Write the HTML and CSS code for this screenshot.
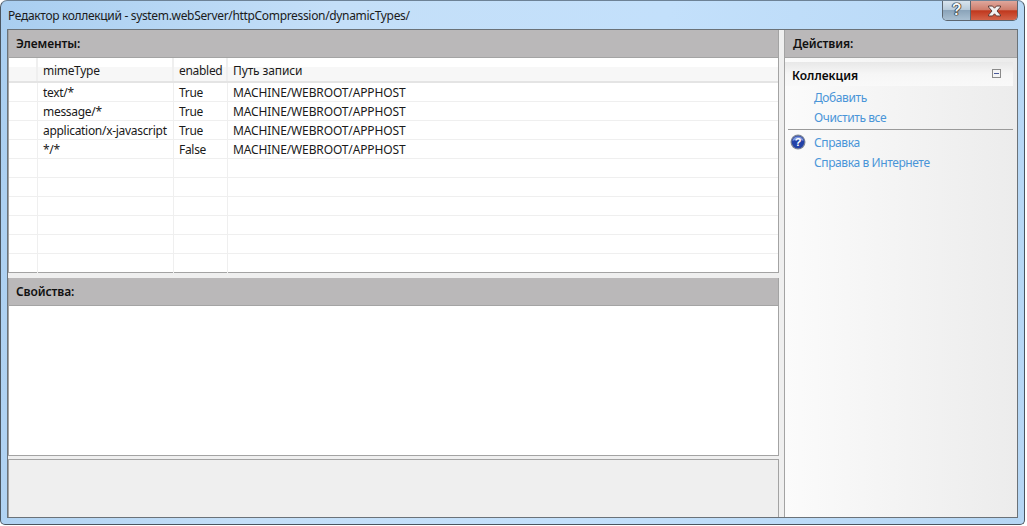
FILE: index.html
```html
<!DOCTYPE html>
<html>
<head>
    <title>Редактор коллекций</title>
    <link rel="stylesheet" href="styles.css">
</head>
<body>
    <div class="window">
        <div class="titlebar">
            <div class="title">Редактор коллекций - system.webServer/httpCompression/dynamicTypes/</div>
            <div class="caption-buttons">
                <div class="btn-help">?</div>
                <div class="btn-close">
                    <svg width="17" height="12" viewBox="0 0 17 12">
                        <path d="M2.500 1h4l2 2.200 2-2.200h4v1l-3.500 4 3.500 4v1h-4l-2-2.200-2 2.200h-4v-1l3.500-4-3.500-4z" fill="#f1f1f1" stroke="#5e3b36" stroke-width="1"/>
                    </svg>
                </div>
            </div>
        </div>
        <div class="client">
            <div class="left">
                <div class="panel panel-items">
                    <div class="panel-head">Элементы:</div>
                    <div class="grid">
                        <div class="row row-head">
                            <div class="cell c0"></div>
                            <div class="cell c1">mimeType</div>
                            <div class="cell c2">enabled</div>
                            <div class="cell c3">Путь записи</div>
                        </div>
                        <div class="row">
                            <div class="cell c0"></div>
                            <div class="cell c1">text/*</div>
                            <div class="cell c2">True</div>
                            <div class="cell c3">MACHINE/WEBROOT/APPHOST</div>
                        </div>
                        <div class="row">
                            <div class="cell c0"></div>
                            <div class="cell c1">message/*</div>
                            <div class="cell c2">True</div>
                            <div class="cell c3">MACHINE/WEBROOT/APPHOST</div>
                        </div>
                        <div class="row">
                            <div class="cell c0"></div>
                            <div class="cell c1">application/x-javascript</div>
                            <div class="cell c2">True</div>
                            <div class="cell c3">MACHINE/WEBROOT/APPHOST</div>
                        </div>
                        <div class="row">
                            <div class="cell c0"></div>
                            <div class="cell c1">*/*</div>
                            <div class="cell c2">False</div>
                            <div class="cell c3">MACHINE/WEBROOT/APPHOST</div>
                        </div>
                        <div class="row"><div class="cell c0"></div><div class="cell c1"></div><div class="cell c2"></div><div class="cell c3"></div></div>
                        <div class="row"><div class="cell c0"></div><div class="cell c1"></div><div class="cell c2"></div><div class="cell c3"></div></div>
                        <div class="row"><div class="cell c0"></div><div class="cell c1"></div><div class="cell c2"></div><div class="cell c3"></div></div>
                        <div class="row"><div class="cell c0"></div><div class="cell c1"></div><div class="cell c2"></div><div class="cell c3"></div></div>
                        <div class="row"><div class="cell c0"></div><div class="cell c1"></div><div class="cell c2"></div><div class="cell c3"></div></div>
                        <div class="row row-last"><div class="cell c0"></div><div class="cell c1"></div><div class="cell c2"></div><div class="cell c3"></div></div>
                    </div>
                </div>
                <div class="panel panel-props">
                    <div class="panel-head">Свойства:</div>
                    <div class="props-body"></div>
                </div>
                <div class="panel-desc"></div>
            </div>
            <div class="actions">
                <div class="panel-head">Действия:</div>
                <div class="actions-body">
                    <div class="group-head">
                        <span>Коллекция</span>
                        <div class="collapse"></div>
                    </div>
                    <a class="action">Добавить</a>
                    <a class="action">Очистить все</a>
                    <div class="sep"></div>
                    <a class="action action-help">
                        <svg class="help-icon" width="16" height="16" viewBox="0 0 16 16">
                            <circle cx="8" cy="8" r="7.500" fill="#7f8798"/>
                            <circle cx="8" cy="8" r="6.300" fill="#2342a8"/>
                            <path d="M2.500 7a5.500 4.500 0 0 1 11 0 8 5 0 0 0-11 0z" fill="#7f97dc"/>
                            <text x="8" y="12" text-anchor="middle" class="help-mark">?</text>
                        </svg>
                        Справка
                    </a>
                    <a class="action">Справка в Интернете</a>
                </div>
            </div>
        </div>
    </div>
</body>
</html>
```

FILE: styles.css
```css
html, body {
    margin: 0;
    padding: 0;
    background: #fff;
}
body {
    width: 1027px;
    height: 526px;
    font-family: "Noto Sans", sans-serif;
    font-size: 12px;
    color: #1a1a1a;
    letter-spacing: -0.3px;
    overflow: hidden;
}
.window {
    box-sizing: border-box;
    width: 1025px;
    height: 525px;
    display: flex;
    flex-direction: column;
    padding: 0 6px 6px 6px;
    background: linear-gradient(100deg, #a9cef0 0%, #c4dff8 30%, #c3e0fb 60%, #b5d6f4 100%);
    border: 1px solid #4a5560;
    border-top-color: #6d8296;
    border-radius: 7px 7px 5px 5px;
}
.titlebar {
    flex: none;
    height: 28px;
    display: flex;
    justify-content: space-between;
}
.title {
    padding-top: 7px;
    margin-left: 1px;
    line-height: 16px;
    letter-spacing: -0.33px;
    color: #1b1b1b;
}
.caption-buttons {
    display: flex;
    height: 19px;
    border: 1px solid #5c6670;
    border-top: none;
    border-radius: 0 0 5px 5px;
    overflow: hidden;
}
.btn-help {
    width: 27px;
    text-align: center;
    font: bold 16px/18px "Liberation Sans", sans-serif;
    color: #f4f6f8;
    text-shadow: 0 0 1px #111, 0 0 1px #111, 0 0 1px #111, 0 0 1px #111;
    background: linear-gradient(#d8e4ee 0%, #b9cbda 45%, #8ba4ba 50%, #a9bfd1 100%);
    border-right: 1px solid #5c6670;
}
.btn-close {
    width: 46px;
    display: flex;
    align-items: center;
    justify-content: center;
    background: linear-gradient(#dfa79c 0%, #cf7f6e 45%, #c0381e 52%, #d4644a 100%);
}
.client {
    flex: 1;
    display: flex;
    gap: 5px;
    background: #efefef;
    border: 1px solid #6b7278;
    min-height: 0;
}
.left {
    width: 771px;
    display: flex;
    flex-direction: column;
    gap: 3px;
}
.panel {
    box-sizing: border-box;
    display: flex;
    flex-direction: column;
    border: 1px solid #a3a3a3;
    border-top: none;
    background: #fff;
}
.panel-items {
    height: 243px;
}
.panel-props {
    height: 178px;
    margin-top: 2px;
}
.panel-head {
    flex: none;
    box-sizing: border-box;
    height: 28px;
    padding-left: 7px;
    line-height: 28px;
    font-weight: 600;
    color: #111;
    letter-spacing: -0.1px;
    background: #bab8b9;
    border-bottom: 1px solid #a4a4a4;
}
.grid {
    flex: 1;
    display: flex;
    flex-direction: column;
}
.row {
    display: flex;
    flex: none;
    height: 19px;
    border-bottom: 1px solid #efefef;
    box-sizing: border-box;
}
.row-head {
    height: 25px;
    border-bottom: 2px solid #e4e4e4;
    background: linear-gradient(#fff 0%, #fff 40%, #f7f7f7 41%, #f7f7f7 100%);
}
.row-last {
    border-bottom: none;
}
.cell {
    box-sizing: border-box;
    padding-left: 5px;
    padding-top: 1px;
    line-height: 18px;
    white-space: nowrap;
    border-right: 1px solid #efefef;
}
.row-head .cell {
    padding-top: 4px;
    border-right: 2px solid #efefef;
}
.c0 {
    width: 29px;
}
.c1 {
    width: 136px;
}
.c2 {
    width: 54px;
}
.c3 {
    flex: 1;
    letter-spacing: -0.13px;
}
.row-head .c3,
.c3 {
    border-right: none;
}
.props-body {
    flex: 1;
}
.panel-desc {
    flex: 1;
    border: 1px solid #a3a3a3;
    border-bottom: none;
    background: #efefef;
}
.actions {
    flex: 1;
    border-left: 1px solid #a3a3a3;
    display: flex;
    flex-direction: column;
}
.actions-body {
    flex: 1;
    padding-top: 4px;
    background: linear-gradient(90deg, #fbfbfb 0%, #ececec 100%);
}
.actions .panel-head {
    padding-left: 8px;
}
.group-head {
    box-sizing: border-box;
    display: flex;
    align-items: center;
    justify-content: space-between;
    height: 24px;
    margin: 0 4px 1px 0;
    padding: 2px 12px 0 7px;
    font-weight: 600;
    letter-spacing: 0;
    color: #0a0a0a;
    background: linear-gradient(#e8e8e8 0%, #f6f6f6 50%, #f9f9f9 100%);
}
.collapse {
    box-sizing: border-box;
    width: 9px;
    height: 9px;
    margin-top: -4px;
    border: 1px solid #8a8a8a;
    background: linear-gradient(#4a5a9a, #4a5a9a) center / 5px 1px no-repeat #f4f4f4;
}
.action {
    display: flex;
    align-items: center;
    height: 20px;
    padding-left: 29px;
    letter-spacing: -0.4px;
    color: #4a95d8;
    position: relative;
}
.sep {
    height: 1px;
    margin: 2px 4px 2px 3px;
    background: #9a9a9a;
}
.help-icon {
    position: absolute;
    left: 5px;
    top: 2px;
}
.help-mark {
    font: bold 11px "Liberation Sans", sans-serif;
    fill: #fff;
}
```
